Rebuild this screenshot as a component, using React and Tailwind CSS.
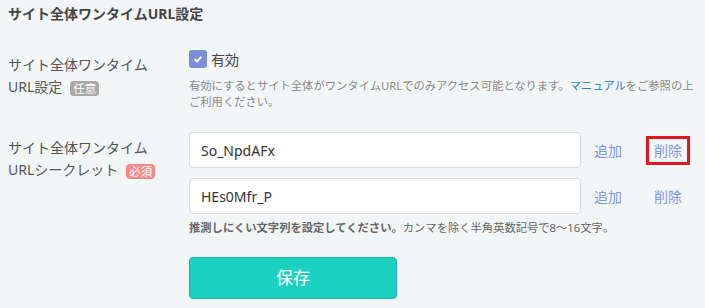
import React from "react";

function Badge({ children, color }) {
  return (
    <span
      className={`inline-flex items-center justify-center h-[15px] px-[3px] ml-[8px] rounded-[4px] text-[11.5px] leading-none text-white align-middle ${color}`}
    >
      {children}
    </span>
  );
}

function SecretRow({ value, boxed }) {
  return (
    <div className="flex items-center">
      <input
        readOnly
        value={value}
        className="w-[392px] h-[36px] px-[11px] bg-white border border-[#d9dcde] rounded-[4px] text-[14px] text-[#333] outline-none"
      />
      <span className="ml-[13px] text-[14px] text-[#8597dc] cursor-pointer">追加</span>
      <span
        className={`ml-[24px] w-[44px] h-[29px] flex items-center justify-center text-[14px] text-[#8597dc] cursor-pointer border-[3px] ${
          boxed ? "border-[#e8141e]" : "border-transparent"
        }`}
      >
        削除
      </span>
    </div>
  );
}

export default function App() {
  return (
    <div
      className="w-[705px] h-[308px] overflow-hidden bg-[#f3f6f7] px-[8px] pt-[4px] text-[#555]"
      style={{ fontFamily: '"Noto Sans", "Noto Sans CJK JP", sans-serif' }}
    >
      {/* title */}
      <h1 className="text-[14px] leading-[20px] font-bold text-[#444]">
        サイト全体ワンタイムURL設定
      </h1>

      {/* 有効 */}
      <section className="flex mt-[26px]">
        <div className="w-[181px] pt-[4px] text-[14px] leading-[22px]">
          サイト全体ワンタイム
          <br />
          URL設定
          <Badge color="bg-[#a8a8a8]">任意</Badge>
        </div>
        <div>
          <label className="flex items-center h-[18px]">
            <span className="w-[18px] h-[18px] rounded-[3px] bg-[#7b8ed6] flex items-center justify-center">
              <svg width="10" height="8" viewBox="0 0 10 8">
                <path d="M1.5 4.2 L4 6.3 L8.5 1.8" fill="none" stroke="white" strokeWidth="2" />
              </svg>
            </span>
            <span className="ml-[4px] text-[14px] text-[#444]">有効</span>
          </label>
          <p className="mt-[10px] text-[11.3px] leading-[16px] text-[#888] whitespace-nowrap">
            有効にするとサイト全体がワンタイムURLでのみアクセス可能となります。
            <a className="text-[#1a7fd6]">マニュアル</a>をご参照の上
            <br />
            ご利用ください。
          </p>
        </div>
      </section>

      {/* シークレット */}
      <section className="flex mt-[22px]">
        <div className="w-[181px] pt-[5px] text-[14px] leading-[22px]">
          サイト全体ワンタイム
          <br />
          URLシークレット
          <Badge color="bg-[#f28a8a]">必須</Badge>
        </div>
        <div>
          <div className="flex flex-col gap-[10px]">
            <SecretRow value="So_NpdAFx" boxed />
            <SecretRow value="HEs0Mfr_P" />
          </div>
          <p className="mt-[6px] text-[11.3px] leading-[16px] text-[#666] whitespace-nowrap">
            <span className="font-bold">推測しにくい文字列を設定してください。</span>
            カンマを除く半角英数記号で8～16文字。
          </p>
          <button className="mt-[21px] w-[208px] h-[42px] rounded-[4px] bg-[#1dd1c2] border border-[#16b9ab] text-white text-[17px]">
            保存
          </button>
        </div>
      </section>
    </div>
  );
}
